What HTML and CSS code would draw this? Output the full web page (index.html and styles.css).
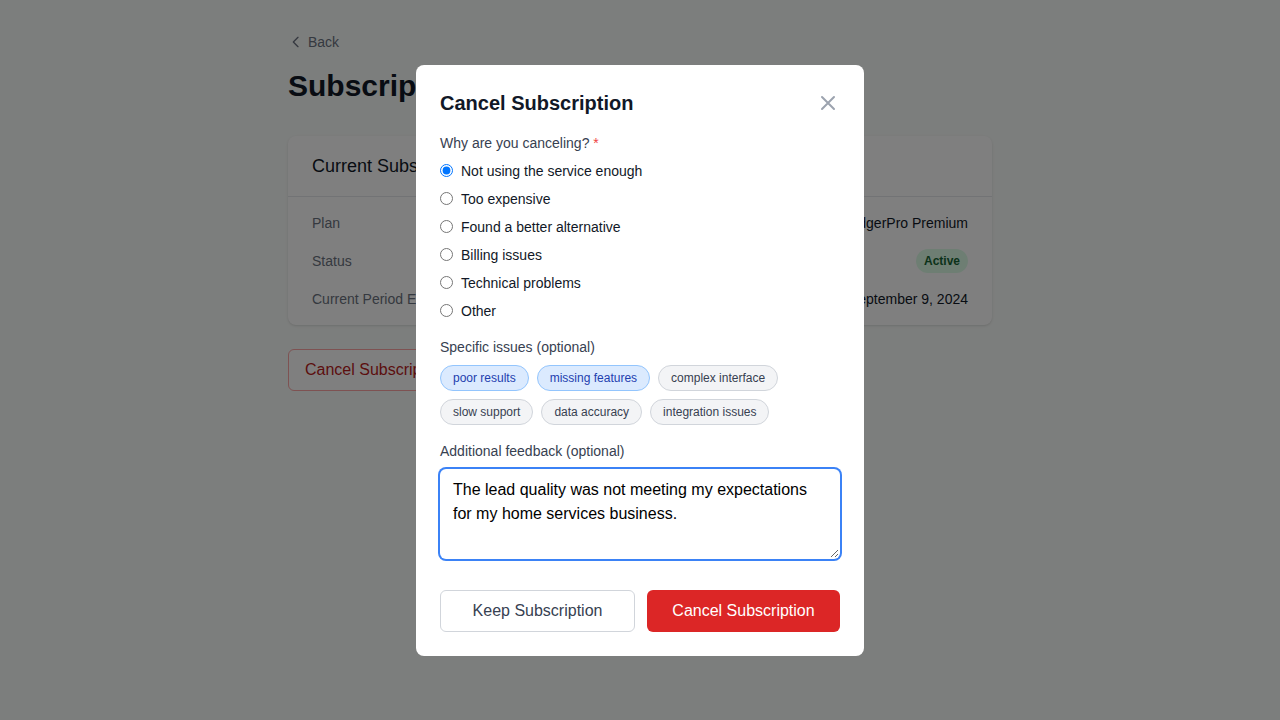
FILE: index.html
```html
<!DOCTYPE html>
<html lang="en">
<head>
<meta charset="utf-8">
<meta name="viewport" content="width=device-width, initial-scale=1">
<title>Subscription</title>
<link rel="stylesheet" href="styles.css">
</head>
<body>
<main class="page">
  <button type="button" class="back">
    <svg class="back-icon" viewBox="0 0 24 24" fill="none" stroke="currentColor" stroke-width="2" stroke-linecap="round" stroke-linejoin="round" aria-hidden="true"><path d="M15 19l-7-7 7-7"/></svg>
    Back
  </button>
  <h1 class="page-title">Subscription</h1>
  <section class="card">
    <h2 class="card-title">Current Subscription</h2>
    <dl class="details">
      <div class="detail"><dt>Plan</dt><dd>LedgerPro Premium</dd></div>
      <div class="detail"><dt>Status</dt><dd class="badge">Active</dd></div>
      <div class="detail"><dt>Current Period Ends</dt><dd>September 9, 2024</dd></div>
    </dl>
  </section>
  <button type="button" class="button button-outline-danger">Cancel Subscription</button>
</main>

<div class="overlay">
  <form class="modal" role="dialog" aria-modal="true" aria-labelledby="modal-title">
    <header class="modal-header">
      <h2 class="modal-title" id="modal-title">Cancel Subscription</h2>
      <button type="button" class="close" aria-label="Close">
        <svg class="close-icon" viewBox="0 0 24 24" fill="none" stroke="currentColor" stroke-width="2" stroke-linecap="round" stroke-linejoin="round" aria-hidden="true"><path d="M6 18L18 6M6 6l12 12"/></svg>
      </button>
    </header>
    <fieldset class="field">
      <legend class="label">Why are you canceling? <span class="required">*</span></legend>
      <div class="options">
        <label class="option"><input type="radio" name="reason" checked><span>Not using the service enough</span></label>
        <label class="option"><input type="radio" name="reason"><span>Too expensive</span></label>
        <label class="option"><input type="radio" name="reason"><span>Found a better alternative</span></label>
        <label class="option"><input type="radio" name="reason"><span>Billing issues</span></label>
        <label class="option"><input type="radio" name="reason"><span>Technical problems</span></label>
        <label class="option"><input type="radio" name="reason"><span>Other</span></label>
      </div>
    </fieldset>
    <fieldset class="field">
      <legend class="label">Specific issues (optional)</legend>
      <div class="chips">
        <button type="button" class="chip chip-selected" aria-pressed="true">poor results</button>
        <button type="button" class="chip chip-selected" aria-pressed="true">missing features</button>
        <button type="button" class="chip" aria-pressed="false">complex interface</button>
        <button type="button" class="chip" aria-pressed="false">slow support</button>
        <button type="button" class="chip" aria-pressed="false">data accuracy</button>
        <button type="button" class="chip" aria-pressed="false">integration issues</button>
      </div>
    </fieldset>
    <div class="feedback">
      <label class="label" for="feedback">Additional feedback (optional)</label>
      <textarea class="textarea" id="feedback" rows="3">The lead quality was not meeting my expectations for my home services business.</textarea>
    </div>
    <div class="actions">
      <button type="button" class="button button-keep">Keep Subscription</button>
      <button type="submit" class="button button-danger">Cancel Subscription</button>
    </div>
  </form>
</div>
</body>
</html>
```
FILE: styles.css
```css
*, *::before, *::after { box-sizing: border-box; margin: 0; padding: 0; }
body {
  min-height: 100vh;
  background: #f9fcfa;
  color: #111827;
  font-family: "Liberation Sans", Arial, sans-serif;
  font-size: 16px;
  line-height: 24px;
}
button, input, textarea { font: inherit; color: inherit; }
button { background: none; border: 0; cursor: pointer; }
fieldset { border: 0; min-width: 0; }

.page { max-width: 768px; margin: 0 auto; padding: 32px; }
.back {
  display: flex;
  align-items: center;
  gap: 4px;
  margin-bottom: 16px;
  color: #6b7280;
  font-size: 14px;
  line-height: 20px;
}
.back-icon { width: 16px; height: 16px; }
.page-title { margin-bottom: 32px; font-size: 30px; line-height: 36px; }
.card {
  margin-bottom: 24px;
  border-radius: 8px;
  background: #fff;
  box-shadow: 0 1px 3px rgba(0, 0, 0, 0.1), 0 1px 2px -1px rgba(0, 0, 0, 0.1);
}
.card-title {
  padding: 16px 24px;
  border-bottom: 1px solid #e5e7eb;
  font-size: 18px;
  font-weight: 400;
  line-height: 28px;
}
.details { display: grid; gap: 16px; padding: 16px 24px; font-size: 14px; line-height: 20px; }
.detail { display: flex; align-items: center; justify-content: space-between; }
.detail dt { color: #6b7280; }
.badge {
  padding: 4px 8px;
  border-radius: 12px;
  background: #dcfce7;
  color: #166534;
  font-size: 12px;
  font-weight: 700;
  line-height: 16px;
}

.button { padding: 8px 16px; border-radius: 6px; }
.button-outline-danger { border: 1px solid #fca5a5; background: #fff; color: #b91c1c; }
.button-keep { flex: 1; border: 1px solid #d1d5db; color: #374151; }
.button-danger { flex: 1; background: #dc2626; color: #fff; }

.overlay {
  position: fixed;
  inset: 0;
  display: flex;
  align-items: center;
  justify-content: center;
  padding: 16px;
  background: rgba(0, 0, 0, 0.5);
}
.modal {
  width: 100%;
  max-width: 448px;
  padding: 24px;
  border-radius: 8px;
  background: #fff;
}
.modal-header { display: flex; align-items: center; justify-content: space-between; margin-bottom: 16px; }
.modal-title { font-size: 20px; line-height: 28px; }
.close { display: flex; color: #9ca3af; }
.close-icon { width: 24px; height: 24px; }
.field { margin-bottom: 16px; }
.label { display: block; margin-bottom: 8px; color: #374151; font-size: 14px; line-height: 20px; }
.required { color: #ef4444; }
.options { display: grid; gap: 8px; font-size: 14px; line-height: 20px; }
.option { display: flex; align-items: center; gap: 8px; }
.option input { width: 13px; height: 13px; }
.chips { display: flex; flex-wrap: wrap; gap: 8px; }
.chip {
  padding: 4px 12px;
  border: 1px solid #d1d5db;
  border-radius: 13px;
  background: #f3f4f6;
  color: #374151;
  font-size: 12px;
  line-height: 16px;
}
.chip-selected { border-color: #93c5fd; background: #dbeafe; color: #1e40af; }
.feedback { margin-bottom: 24px; }
.textarea {
  width: 100%;
  padding: 8px 12px;
  border: 1px solid transparent;
  border-radius: 6px;
  outline: 0;
  background: #fff;
  box-shadow: 0 0 0 2px #3b82f6;
  color: #000;
  resize: vertical;
}
.actions { display: flex; gap: 12px; }
```
